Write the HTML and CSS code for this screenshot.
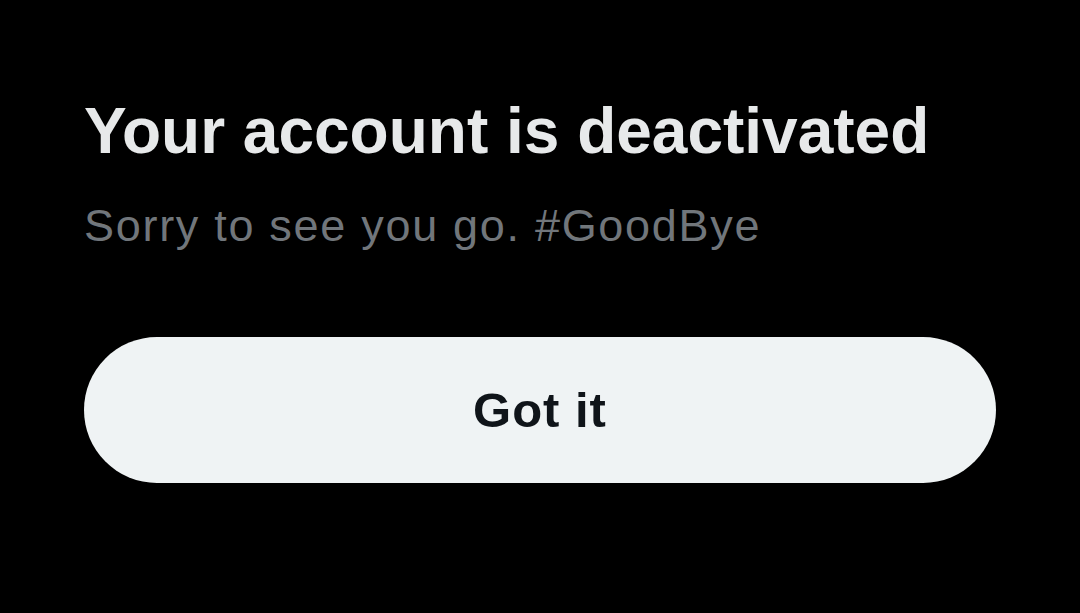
FILE: index.html
```html
<!DOCTYPE html>
<html lang="en">
<head>
    <meta charset="UTF-8">
    <meta name="viewport" content="width=device-width, initial-scale=1.0">
    <title>Account deactivated</title>
    <link rel="stylesheet" href="styles.css">
</head>
<body>
    <main class="sheet">
        <h1 class="title">Your account is deactivated</h1>
        <p class="subtitle">Sorry to see you go. #GoodBye</p>
        <button type="button" class="got-it">Got it</button>
    </main>
</body>
</html>
```

FILE: styles.css
```css
:root {
    --background-color: #000000;
    --title-color: #e7e9ea;
    --muted-color: #71767b;
    --button-background: #eff3f4;
    --button-text: #0f1419;
}
body {
    margin: 0;
    padding: 0;
    background-color: var(--background-color);
    font-family: "Liberation Sans", Arial, sans-serif;
    min-height: 100vh;
}
.sheet {
    display: flex;
    flex-direction: column;
    padding: 99px 84px 0 84px;
}
.title {
    margin: 0;
    font-size: 64px;
    line-height: 64px;
    font-weight: 700;
    color: var(--title-color);
}
.subtitle {
    margin: 40px 0 0 0;
    font-size: 45px;
    line-height: 45px;
    letter-spacing: 1.7px;
    color: var(--muted-color);
}
.got-it {
    margin-top: 89px;
    height: 146px;
    width: 912px;
    border: none;
    border-radius: 73px;
    background-color: var(--button-background);
    color: var(--button-text);
    font-family: inherit;
    font-size: 49px;
    letter-spacing: 1px;
    font-weight: 700;
    cursor: pointer;
}
```
